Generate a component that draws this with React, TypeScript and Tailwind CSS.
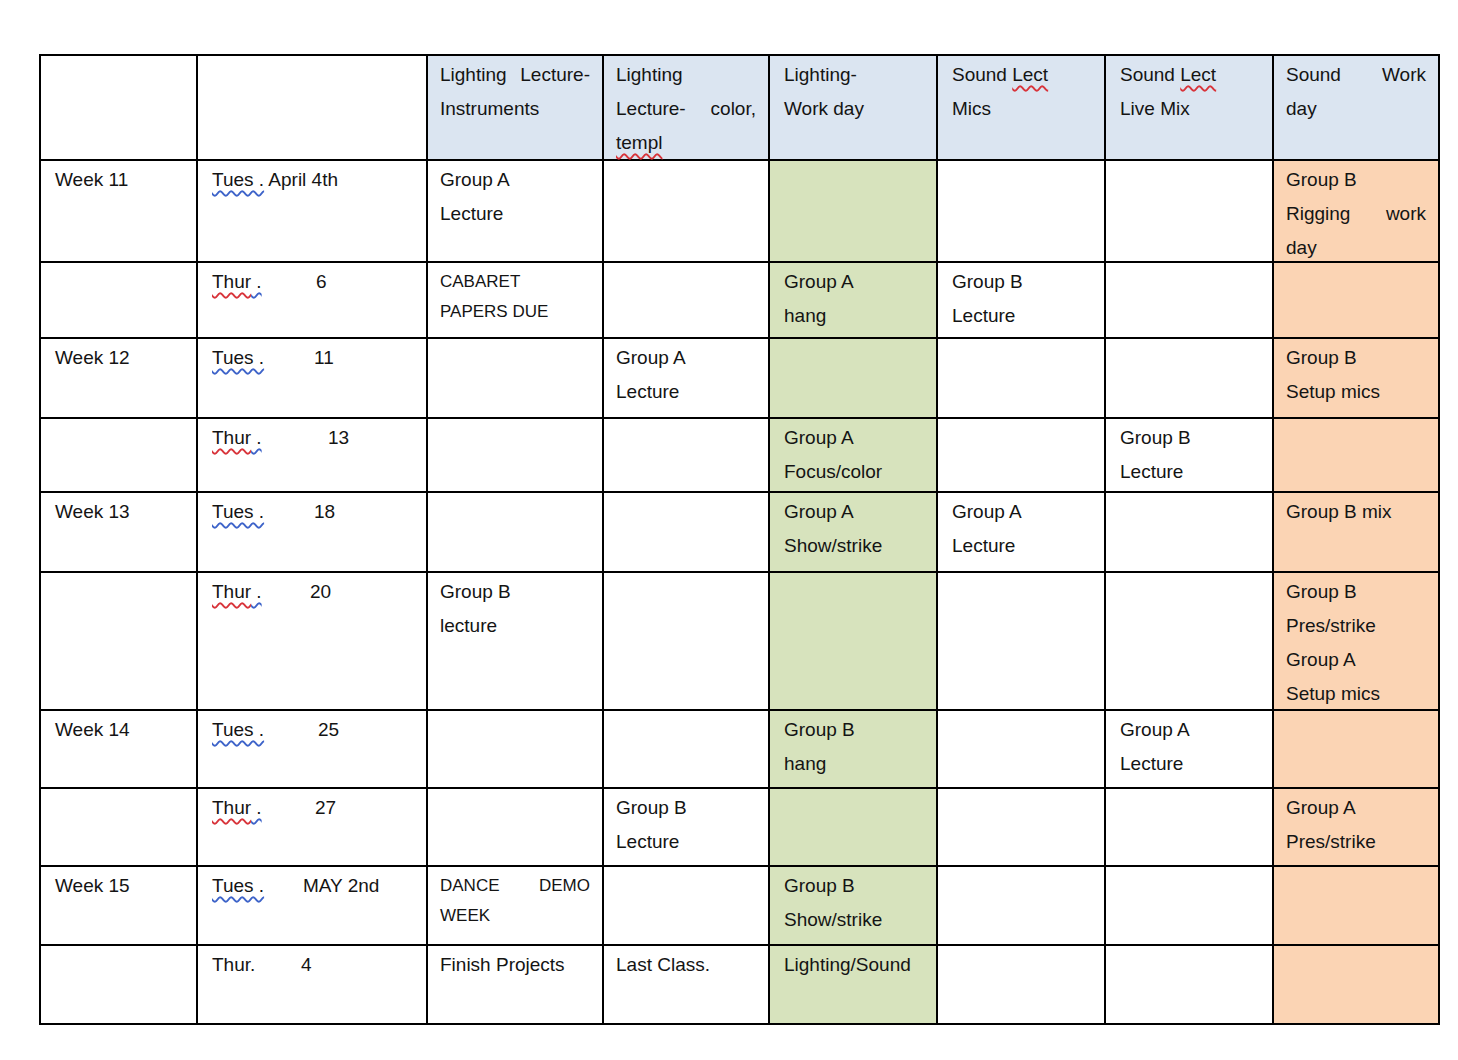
import type { ReactNode } from 'react';

// squiggles from the word processor's spell / grammar check
const Red = ({ children }: { children: ReactNode }) => (
  <span className="underline decoration-wavy decoration-[#d8333a] decoration-[1.5px] underline-offset-[4px]">{children}</span>
);
const Blue = ({ children }: { children: ReactNode }) => (
  <span className="underline decoration-wavy decoration-[#3d63c9] decoration-[1.5px] underline-offset-[4px]">{children}</span>
);

type Line = ReactNode | [string, string];
type Cell = { lines?: Line[]; small?: boolean; date?: ReactNode };

const tues = <Blue>Tues .</Blue>;
const thur = (
  <>
    <Red>Thur</Red>
    <Blue> .</Blue>
  </>
);

const Date = ({ day, num, w }: { day: ReactNode; num: string; w: string }) => (
  <div className="flex">
    <span className={`shrink-0 ${w}`}>{day}</span>
    <span>{num}</span>
  </div>
);

const header: Cell[] = [
  {},
  {},
  { lines: [['Lighting', 'Lecture-'], 'Instruments'] },
  { lines: ['Lighting', ['Lecture-', 'color,'], <Red>templ</Red>] },
  { lines: ['Lighting-', 'Work day'] },
  { lines: [<>Sound <Red>Lect</Red></>, 'Mics'] },
  { lines: [<>Sound <Red>Lect</Red></>, 'Live Mix'] },
  { lines: [['Sound', 'Work'], 'day'] },
];

const rows: { h: string; cells: Cell[] }[] = [
  {
    h: 'h-[102px]',
    cells: [
      { lines: ['Week 11'] },
      { lines: [<>{tues} April 4th</>] },
      { lines: ['Group A', 'Lecture'] },
      {},
      {},
      {},
      {},
      { lines: ['Group B', ['Rigging', 'work'], 'day'] },
    ],
  },
  {
    h: 'h-[76px]',
    cells: [
      {},
      { date: <Date day={thur} num="6" w="w-[104px]" /> },
      { lines: ['CABARET', 'PAPERS DUE'], small: true },
      {},
      { lines: ['Group A', 'hang'] },
      { lines: ['Group B', 'Lecture'] },
      {},
      {},
    ],
  },
  {
    h: 'h-[80px]',
    cells: [
      { lines: ['Week 12'] },
      { date: <Date day={tues} num="11" w="w-[102px]" /> },
      {},
      { lines: ['Group A', 'Lecture'] },
      {},
      {},
      {},
      { lines: ['Group B', 'Setup mics'] },
    ],
  },
  {
    h: 'h-[74px]',
    cells: [
      {},
      { date: <Date day={thur} num="13" w="w-[116px]" /> },
      {},
      {},
      { lines: ['Group A', 'Focus/color'] },
      {},
      { lines: ['Group B', 'Lecture'] },
      {},
    ],
  },
  {
    h: 'h-[80px]',
    cells: [
      { lines: ['Week 13'] },
      { date: <Date day={tues} num="18" w="w-[102px]" /> },
      {},
      {},
      { lines: ['Group A', 'Show/strike'] },
      { lines: ['Group A', 'Lecture'] },
      {},
      { lines: ['Group B mix'] },
    ],
  },
  {
    h: 'h-[138px]',
    cells: [
      {},
      { date: <Date day={thur} num="20" w="w-[98px]" /> },
      { lines: ['Group B', 'lecture'] },
      {},
      {},
      {},
      {},
      { lines: ['Group B', 'Pres/strike', 'Group A', 'Setup mics'] },
    ],
  },
  {
    h: 'h-[78px]',
    cells: [
      { lines: ['Week 14'] },
      { date: <Date day={tues} num="25" w="w-[106px]" /> },
      {},
      {},
      { lines: ['Group B', 'hang'] },
      {},
      { lines: ['Group A', 'Lecture'] },
      {},
    ],
  },
  {
    h: 'h-[78px]',
    cells: [
      {},
      { date: <Date day={thur} num="27" w="w-[103px]" /> },
      {},
      { lines: ['Group B', 'Lecture'] },
      {},
      {},
      {},
      { lines: ['Group A', 'Pres/strike'] },
    ],
  },
  {
    h: 'h-[79px]',
    cells: [
      { lines: ['Week 15'] },
      { date: <Date day={tues} num="MAY 2nd" w="w-[91px]" /> },
      { lines: [['DANCE', 'DEMO'], 'WEEK'], small: true },
      {},
      { lines: ['Group B', 'Show/strike'] },
      {},
      {},
      {},
    ],
  },
  {
    h: 'h-[79px]',
    cells: [
      {},
      { date: <Date day="Thur." num="4" w="w-[89px]" /> },
      { lines: ['Finish Projects'] },
      { lines: ['Last Class.'] },
      { lines: ['Lighting/Sound'] },
      {},
      {},
      {},
    ],
  },
];

const widths = ['w-[157px]', 'w-[230px]', 'w-[176px]', 'w-[166px]', 'w-[168px]', 'w-[168px]', 'w-[168px]', 'w-[166px]'];
const pads = ['pl-[14px]', 'pl-[14px]', 'pl-[12px]', 'pl-[12px]', 'pl-[14px]', 'pl-[14px]', 'pl-[14px]', 'pl-[12px]'];

function bodyBg(col: number) {
  if (col === 4) return 'bg-[#d7e3bd]';
  if (col === 7) return 'bg-[#fbd4b4]';
  return 'bg-white';
}

function CellBody({ cell }: { cell: Cell }) {
  if (cell.date) return <div className="-mb-[8px]">{cell.date}</div>;
  if (!cell.lines) return null;
  // negative bottom margin so the row height comes from the tr, not the text
  return (
    <div className={cell.small ? '-mb-[8px] pt-[2px] text-[17px] leading-[30px]' : '-mb-[8px]'}>
      {cell.lines.map((line, i) =>
        Array.isArray(line) ? (
          <div key={i} className="flex justify-between">
            <span>{line[0]}</span>
            <span>{line[1]}</span>
          </div>
        ) : (
          <div key={i}>{line}</div>
        ),
      )}
    </div>
  );
}

export default function App() {
  return (
    <div className="min-h-screen bg-white pt-[54px] pl-[39px] font-['Liberation_Sans',Arial,sans-serif] text-[19px] leading-[34px] text-[#141414]">
      <table className="table-fixed border-collapse w-[1400px]">
        <colgroup>
          {widths.map((w, i) => (
            <col key={i} className={w} />
          ))}
        </colgroup>
        <tbody>
          <tr className="h-[105px]">
            {header.map((cell, i) => (
              <td
                key={i}
                className={`border-2 border-black align-top pt-[2px] pr-[12px] ${pads[i]} ${i >= 2 ? 'bg-[#dbe5f1]' : 'bg-white'}`}
              >
                <CellBody cell={cell} />
              </td>
            ))}
          </tr>
          {rows.map((row, r) => (
            <tr key={r} className={row.h}>
              {row.cells.map((cell, i) => (
                <td key={i} className={`border-2 border-black align-top pt-[2px] pr-[12px] ${pads[i]} ${bodyBg(i)}`}>
                  <CellBody cell={cell} />
                </td>
              ))}
            </tr>
          ))}
        </tbody>
      </table>
    </div>
  );
}
